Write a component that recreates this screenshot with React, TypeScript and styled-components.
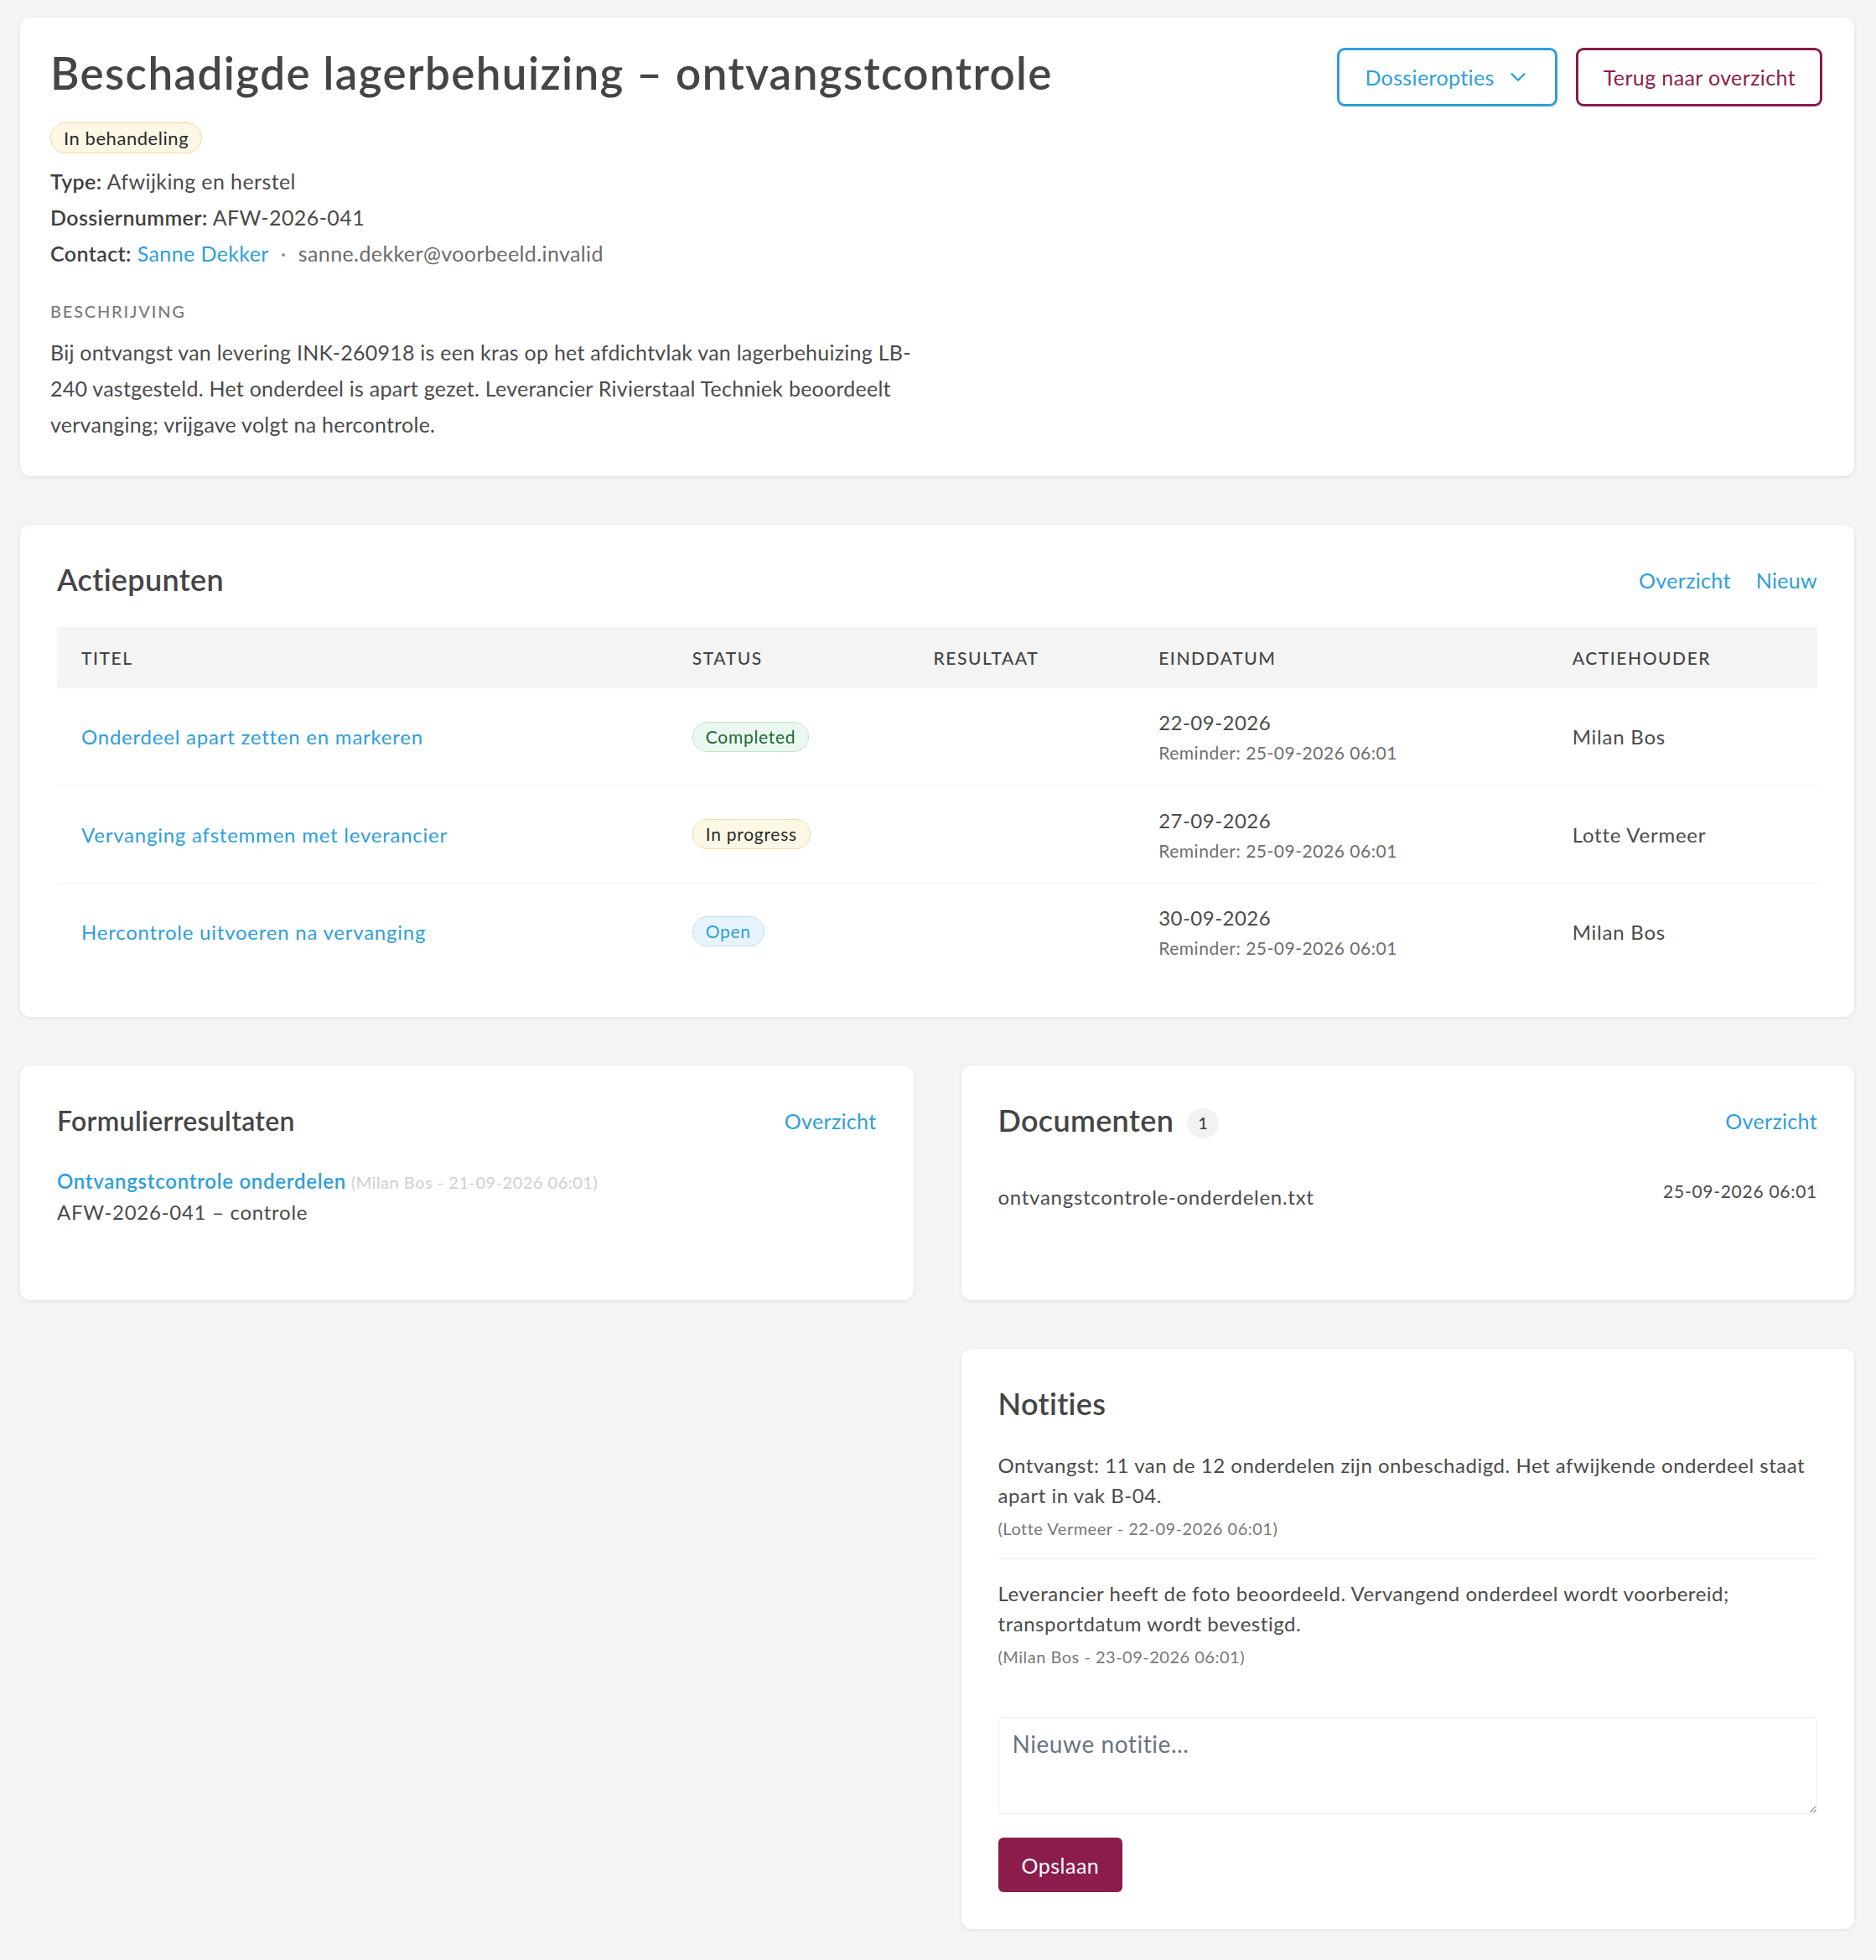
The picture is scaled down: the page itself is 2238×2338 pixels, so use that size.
import React from "react";
import styled, { createGlobalStyle } from "styled-components";
import { ChevronDown } from "lucide-react";

const GlobalStyle = createGlobalStyle`
  html, body {
    margin: 0;
    padding: 0;
    background: #f3f4f6;
  }
  body {
    font-family: Lato, "Noto Sans", sans-serif;
    letter-spacing: 0.02em;
    color: #4a4a4a;
  }
  * {
    box-sizing: border-box;
  }
`;

const Page = styled.div`
  display: flex;
  flex-direction: column;
  gap: 58px;
  padding: 21px 26px 39px 24px;
`;

const Card = styled.section`
  background: #ffffff;
  border-radius: 12px;
  box-shadow: 0 1px 4px rgba(0, 0, 0, 0.09);
  padding: 44px;
`;

/* ---------- dossier header ---------- */

const HeaderCard = styled(Card)`
  padding: 34px 38px 40px 36px;
`;

const TopRow = styled.div`
  display: flex;
  justify-content: space-between;
  align-items: flex-start;
`;

const Title = styled.h1`
  margin: 0;
  font-size: 53px;
  line-height: 1.2;
  font-weight: 600;
  letter-spacing: 0.026em;
  color: #454545;
`;

const Actions = styled.div`
  display: flex;
  gap: 22px;
  padding-top: 2px;
`;

const OutlineButton = styled.button<{ $tone: "blue" | "maroon" }>`
  display: inline-flex;
  align-items: center;
  gap: 13px;
  height: 70px;
  padding: 0 ${(p) => (p.$tone === "blue" ? 29 : 29)}px 0 30px;
  background: #fff;
  border: 3px solid ${(p) => (p.$tone === "blue" ? "#2e9edc" : "#8b1c4b")};
  border-radius: 9px;
  color: ${(p) => (p.$tone === "blue" ? "#2e9edc" : "#8b1c4b")};
  font-family: inherit;
  font-size: 25px;
  letter-spacing: 0.015em;
  cursor: pointer;
`;

const StatusPill = styled.span`
  display: inline-block;
  margin-top: 19px;
  padding: 0 15px;
  height: 37px;
  line-height: 35px;
  border-radius: 19px;
  background: #fdf7e6;
  border: 1px solid #f5dc9c;
  color: #2a2a2a;
  font-size: 22px;
  letter-spacing: 0.025em;
`;

const MetaList = styled.div`
  margin-top: 12px;
  display: flex;
  flex-direction: column;
`;

const MetaLine = styled.div`
  font-size: 25px;
  line-height: 43px;
  letter-spacing: 0.016em;
  color: #4a4a4a;

  b {
    font-weight: 600;
    color: #3f3f3f;
  }
`;

const Link = styled.a<{ $strong?: boolean }>`
  color: #2e9edc;
  text-decoration: none;
  font-weight: ${(p) => (p.$strong ? 600 : 400)};
  cursor: pointer;
`;

const Muted = styled.span`
  color: #6b6b6b;
`;

const Dot = styled.span`
  color: #8a8a8a;
  margin: 0 14px;
`;

const SectionLabel = styled.div`
  margin-top: 32px;
  font-size: 20px;
  line-height: 30px;
  letter-spacing: 0.09em;
  color: #7a7a7a;
  font-weight: 500;
`;

const Description = styled.p`
  margin: 13px 0 0;
  max-width: 1060px;
  font-size: 25px;
  line-height: 43px;
  letter-spacing: 0.01em;
  color: #4a4a4a;
`;

/* ---------- generic card header ---------- */

const CardHead = styled.div`
  display: flex;
  justify-content: space-between;
  align-items: center;
`;

const CardTitle = styled.h2<{ $size?: number }>`
  margin: 0;
  display: flex;
  align-items: center;
  gap: 16px;
  font-size: ${(p) => p.$size ?? 36}px;
  line-height: 43px;
  font-weight: 600;
  color: #454545;
`;

const CountBubble = styled.span`
  display: inline-flex;
  align-items: center;
  justify-content: center;
  width: 38px;
  height: 36px;
  margin-top: 6px;
  border-radius: 50%;
  background: #f2f2f2;
  color: #444;
  font-size: 20px;
  font-weight: 500;
`;

const HeadLinks = styled.div`
  display: flex;
  gap: 30px;
  font-size: 25px;
`;

/* ---------- action table ---------- */

const Table = styled.table`
  width: 100%;
  margin-top: 35px;
  border-collapse: collapse;
  table-layout: fixed;
`;

const Th = styled.th<{ $w: string }>`
  width: ${(p) => p.$w};
  height: 73px;
  padding: 0 29px;
  background: #f4f4f4;
  text-align: left;
  font-size: 21px;
  font-weight: 500;
  letter-spacing: 0.075em;
  color: #444;
`;

const Tr = styled.tr`
  & + & td {
    border-top: 1px solid #efefef;
  }
`;

const Td = styled.td`
  height: 116px;
  padding: 0 29px;
  vertical-align: middle;
  font-size: 24px;
  letter-spacing: 0.032em;
  color: #4a4a4a;
`;

const DateMain = styled.div`
  line-height: 36px;
  letter-spacing: 0.02em;
`;

const DateSub = styled.div`
  font-size: 21px;
  line-height: 30px;
  margin-top: 3px;
  letter-spacing: 0.025em;
  color: #6e6e6e;
`;

const badgeTones = {
  completed: { bg: "#ebf8ef", border: "#bfe6cb", fg: "#1c6a33" },
  progress: { bg: "#fdf7e6", border: "#f5dc9c", fg: "#2a2a2a" },
  open: { bg: "#e8f4fc", border: "#b9ddf4", fg: "#2e9edc" },
};

const Badge = styled.span<{ $tone: keyof typeof badgeTones }>`
  display: inline-block;
  height: 36px;
  padding: 0 15px;
  line-height: 34px;
  border-radius: 18px;
  font-size: 21px;
  letter-spacing: 0.035em;
  background: ${(p) => badgeTones[p.$tone].bg};
  border: 1px solid ${(p) => badgeTones[p.$tone].border};
  color: ${(p) => badgeTones[p.$tone].fg};
`;

/* ---------- lower grid ---------- */

const Grid = styled.div`
  display: grid;
  grid-template-columns: 1fr 1fr;
  column-gap: 57px;
  row-gap: 58px;
  align-items: start;
`;

const GridCard = styled(Card)<{ $col?: number }>`
  grid-column: ${(p) => p.$col ?? "auto"};
  min-height: ${(p) => (p.$col ? "auto" : "280px")};
`;

const FormEntry = styled.div`
  margin-top: 33px;
  font-size: 24px;
  line-height: 35px;
  letter-spacing: 0.03em;
`;

const EntryLink = styled(Link)`
  font-size: 24px;
  letter-spacing: 0.03em;
`;

const FaintMeta = styled.span`
  margin-left: 6px;
  font-size: 20px;
  letter-spacing: 0.025em;
  color: #cfcfcf;
`;

const FileRow = styled.div`
  display: flex;
  justify-content: space-between;
  align-items: flex-start;
  margin-top: 52px;
  font-size: 24px;
  line-height: 36px;
  letter-spacing: 0.03em;
`;

const FileDate = styled.span`
  font-size: 21px;
  line-height: 22px;
  color: #4a4a4a;
`;

const Note = styled.div`
  padding: 23px 0 21px;
  font-size: 24px;
  line-height: 36px;
  letter-spacing: 0.022em;
  color: #4a4a4a;

  & + & {
    border-top: 1px solid #eeeeee;
  }
`;

const NoteList = styled.div`
  margin-top: 11px;
`;

const NoteMeta = styled.div`
  margin-top: 6px;
  font-size: 20px;
  line-height: 30px;
  letter-spacing: 0.025em;
  color: #777;
`;

const NoteForm = styled.form`
  margin-top: 36px;
  display: flex;
  flex-direction: column;
  align-items: flex-start;
  gap: 28px;
`;

const TextArea = styled.textarea`
  width: 100%;
  height: 116px;
  padding: 14px 16px;
  border: 1px solid #ececec;
  border-radius: 6px;
  font-family: inherit;
  font-size: 28px;
  letter-spacing: 0.02em;
  color: #333;
  resize: vertical;

  &::placeholder {
    color: #6b7280;
  }
`;

const SaveButton = styled.button`
  height: 65px;
  padding: 0 28px;
  border: 0;
  border-radius: 6px;
  background: #8b1c4b;
  color: #fff;
  font-family: inherit;
  font-size: 25px;
  letter-spacing: 0.02em;
  cursor: pointer;
`;

const actions = [
  {
    title: "Onderdeel apart zetten en markeren",
    status: "Completed",
    tone: "completed" as const,
    due: "22-09-2026",
    owner: "Milan Bos",
  },
  {
    title: "Vervanging afstemmen met leverancier",
    status: "In progress",
    tone: "progress" as const,
    due: "27-09-2026",
    owner: "Lotte Vermeer",
  },
  {
    title: "Hercontrole uitvoeren na vervanging",
    status: "Open",
    tone: "open" as const,
    due: "30-09-2026",
    owner: "Milan Bos",
  },
];

const notes = [
  {
    text: "Ontvangst: 11 van de 12 onderdelen zijn onbeschadigd. Het afwijkende onderdeel staat apart in vak B-04.",
    meta: "(Lotte Vermeer - 22-09-2026 06:01)",
  },
  {
    text: "Leverancier heeft de foto beoordeeld. Vervangend onderdeel wordt voorbereid; transportdatum wordt bevestigd.",
    meta: "(Milan Bos - 23-09-2026 06:01)",
  },
];

export default function App() {
  return (
    <>
      <GlobalStyle />
      <Page>
        <HeaderCard>
          <TopRow>
            <Title>Beschadigde lagerbehuizing – ontvangstcontrole</Title>
            <Actions>
              <OutlineButton $tone="blue">
                Dossieropties <ChevronDown size={30} strokeWidth={1.9} />
              </OutlineButton>
              <OutlineButton $tone="maroon">Terug naar overzicht</OutlineButton>
            </Actions>
          </TopRow>
          <StatusPill>In behandeling</StatusPill>
          <MetaList>
            <MetaLine>
              <b>Type:</b> Afwijking en herstel
            </MetaLine>
            <MetaLine>
              <b>Dossiernummer:</b> AFW-2026-041
            </MetaLine>
            <MetaLine>
              <b>Contact:</b> <Link>Sanne Dekker</Link>
              <Dot>·</Dot>
              <Muted>sanne.dekker@voorbeeld.invalid</Muted>
            </MetaLine>
          </MetaList>
          <SectionLabel>BESCHRIJVING</SectionLabel>
          <Description>
            Bij ontvangst van levering INK-260918 is een kras op het afdichtvlak van
            lagerbehuizing LB-240 vastgesteld. Het onderdeel is apart gezet. Leverancier
            Rivierstaal Techniek beoordeelt vervanging; vrijgave volgt na hercontrole.
          </Description>
        </HeaderCard>

        <Card>
          <CardHead>
            <CardTitle>Actiepunten</CardTitle>
            <HeadLinks>
              <Link>Overzicht</Link>
              <Link>Nieuw</Link>
            </HeadLinks>
          </CardHead>
          <Table>
            <thead>
              <tr>
                <Th $w="34.7%">TITEL</Th>
                <Th $w="13.7%">STATUS</Th>
                <Th $w="12.8%">RESULTAAT</Th>
                <Th $w="23.5%">EINDDATUM</Th>
                <Th $w="15.3%">ACTIEHOUDER</Th>
              </tr>
            </thead>
            <tbody>
              {actions.map((a) => (
                <Tr key={a.title}>
                  <Td>
                    <Link>{a.title}</Link>
                  </Td>
                  <Td>
                    <Badge $tone={a.tone}>{a.status}</Badge>
                  </Td>
                  <Td />
                  <Td>
                    <DateMain>{a.due}</DateMain>
                    <DateSub>Reminder: 25-09-2026 06:01</DateSub>
                  </Td>
                  <Td>{a.owner}</Td>
                </Tr>
              ))}
            </tbody>
          </Table>
        </Card>

        <Grid>
          <GridCard>
            <CardHead>
              <CardTitle $size={32}>Formulierresultaten</CardTitle>
              <HeadLinks>
                <Link>Overzicht</Link>
              </HeadLinks>
            </CardHead>
            <FormEntry>
              <div>
                <EntryLink $strong>Ontvangstcontrole onderdelen</EntryLink>
                <FaintMeta>(Milan Bos - 21-09-2026 06:01)</FaintMeta>
              </div>
              <div>AFW-2026-041 – controle</div>
            </FormEntry>
          </GridCard>

          <GridCard>
            <CardHead>
              <CardTitle>
                Documenten <CountBubble>1</CountBubble>
              </CardTitle>
              <HeadLinks>
                <Link>Overzicht</Link>
              </HeadLinks>
            </CardHead>
            <FileRow>
              <span>ontvangstcontrole-onderdelen.txt</span>
              <FileDate>25-09-2026 06:01</FileDate>
            </FileRow>
          </GridCard>

          <GridCard $col={2}>
            <CardTitle>Notities</CardTitle>
            <NoteList>
              {notes.map((n) => (
                <Note key={n.meta}>
                  {n.text}
                  <NoteMeta>{n.meta}</NoteMeta>
                </Note>
              ))}
            </NoteList>
            <NoteForm onSubmit={(e) => e.preventDefault()}>
              <TextArea placeholder="Nieuwe notitie..." />
              <SaveButton type="submit">Opslaan</SaveButton>
            </NoteForm>
          </GridCard>
        </Grid>
      </Page>
    </>
  );
}
